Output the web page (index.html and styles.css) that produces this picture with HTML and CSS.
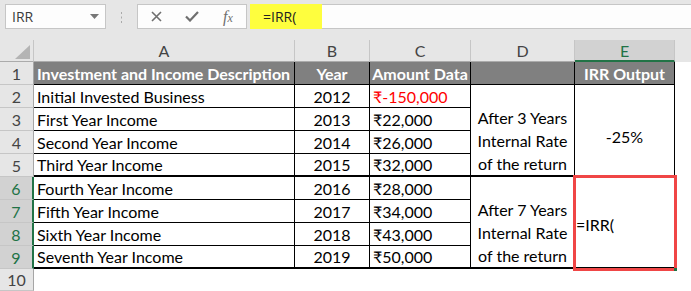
FILE: index.html
```html
<!DOCTYPE html>
<html lang="en">
<head>
    <meta charset="UTF-8">
    <title>IRR</title>
    <link rel="stylesheet" href="styles.css">
</head>
<body>
    <div class="toolbar">
        <div class="namebox">
            <span>IRR</span>
            <svg width="9" height="5" viewBox="0 0 9 5"><path d="M0 0h9L4.5 5z" fill="#777"/></svg>
        </div>
        <div class="grip">
            <svg width="3" height="11" viewBox="0 0 3 11"><rect x="1" y="0" width="1" height="2" fill="#aaa"/><rect x="1" y="4.5" width="1" height="2" fill="#aaa"/><rect x="1" y="9" width="1" height="2" fill="#aaa"/></svg>
        </div>
        <div class="fxbox">
            <span class="slot"><svg width="11" height="11" viewBox="0 0 11 11"><path d="M1 1l9 9M10 1l-9 9" stroke="#6f6f6f" stroke-width="1.6"/></svg></span>
            <span class="slot"><svg width="14" height="11" viewBox="0 0 14 11"><path d="M1 5.5l4 4L13 1" stroke="#6f6f6f" stroke-width="2.2" fill="none"/></svg></span>
            <span class="slot fx"><i>f</i><i class="x">x</i></span>
        </div>
        <div class="formula">
            <span class="hl">=IRR(</span>
        </div>
    </div>

    <div class="sheet">
        <div class="corner"><svg width="34" height="22" viewBox="0 0 34 22"><path d="M15 19L30 5v14z" fill="#b4b4b4"/></svg></div>
        <div class="col-h">A</div>
        <div class="col-h">B</div>
        <div class="col-h">C</div>
        <div class="col-h">D</div>
        <div class="col-h sel">E</div>
        <div class="col-h last"></div>

        <div class="row-h">1</div>
        <div class="cell head left">Investment and Income Description</div>
        <div class="cell head">Year</div>
        <div class="cell head">Amount Data</div>
        <div class="cell head"></div>
        <div class="cell head">IRR Output</div>
        <div class="blank"></div>

        <div class="row-h">2</div>
        <div class="cell">Initial Invested Business</div>
        <div class="cell mid">2012</div>
        <div class="cell neg">₹-150,000</div>
        <div class="cell note thick">After 3 Years Internal Rate of the return</div>
        <div class="cell result thick">-25%</div>
        <div class="blank"></div>

        <div class="row-h">3</div>
        <div class="cell">First Year Income</div>
        <div class="cell mid">2013</div>
        <div class="cell">₹22,000</div>
        <div class="blank"></div>

        <div class="row-h">4</div>
        <div class="cell">Second Year Income</div>
        <div class="cell mid">2014</div>
        <div class="cell">₹26,000</div>
        <div class="blank"></div>

        <div class="row-h">5</div>
        <div class="cell thick">Third Year Income</div>
        <div class="cell mid thick">2015</div>
        <div class="cell thick">₹32,000</div>
        <div class="blank"></div>

        <div class="row-h sel">6</div>
        <div class="cell">Fourth Year Income</div>
        <div class="cell mid">2016</div>
        <div class="cell">₹28,000</div>
        <div class="cell note thick">After 7 Years Internal Rate of the return</div>
        <div class="cell active thick">=IRR(</div>
        <div class="blank"></div>

        <div class="row-h sel">7</div>
        <div class="cell">Fifth Year Income</div>
        <div class="cell mid">2017</div>
        <div class="cell">₹34,000</div>
        <div class="blank"></div>

        <div class="row-h sel">8</div>
        <div class="cell">Sixth Year Income</div>
        <div class="cell mid">2018</div>
        <div class="cell">₹43,000</div>
        <div class="blank"></div>

        <div class="row-h sel">9</div>
        <div class="cell thick">Seventh Year Income</div>
        <div class="cell mid thick">2019</div>
        <div class="cell thick">₹50,000</div>
        <div class="blank"></div>

        <div class="row-h">10</div>
        <div class="blank wide"></div>
    </div>
</body>
</html>
```

FILE: styles.css
```css
body {
    margin: 0;
    width: 691px;
    height: 291px;
    overflow: hidden;
    background: #fff;
    font-family: Lato, "Noto Sans", sans-serif;
}

/* formula bar */
.toolbar {
    display: flex;
    align-items: flex-start;
    height: 40px;
    padding-top: 4px;
    box-sizing: border-box;
    background: #e6e6e6;
}

.namebox {
    margin-left: 5px;
    width: 101px;
    height: 25px;
    box-sizing: border-box;
    border: 1px solid #c6c6c6;
    background: #fdfdfd;
    display: flex;
    align-items: center;
    justify-content: space-between;
    padding: 0 6px 0 6px;
    font-family: "Open Sans", sans-serif;
    font-size: 14px;
    color: #3a3a3a;
}

.grip {
    width: 31px;
    display: flex;
    justify-content: center;
    padding-top: 8px;
}

.fxbox {
    width: 110px;
    height: 25px;
    box-sizing: border-box;
    border: 1px solid #c6c6c6;
    background: #fdfdfd;
    display: flex;
    align-items: center;
}

.slot {
    flex: 1;
    display: flex;
    justify-content: center;
    align-items: center;
}

.fx {
    font-family: "Liberation Serif", serif;
    font-size: 16px;
    color: #6f6f6f;
}

.fx .x {
    font-size: 12px;
    margin-top: 4px;
}

.formula {
    flex: 1;
    margin-left: 3px;
    height: 25px;
    box-sizing: border-box;
    border: 1px solid #c6c6c6;
    border-right: none;
    background: #fdfdfd;
    display: flex;
}

.hl {
    margin: -1px 0 -1px -1px;
    width: 72px;
    box-sizing: border-box;
    padding-left: 13px;
    background: #fefe3e;
    display: flex;
    align-items: center;
    font-family: "Open Sans", sans-serif;
    font-size: 14px;
    color: #222;
}

/* sheet grid */
.sheet {
    display: grid;
    grid-template-columns: 34px 261px 75px 101px 104px 100px 1fr;
    grid-template-rows: 22px repeat(9, 23px) 1fr;
    height: 251px;
    font-size: 16px;
    color: #000;
}

.sheet > div {
    box-sizing: border-box;
    min-width: 0;
}

.corner {
    background: #e6e6e6;
    border-right: 1px solid #c6c6c6;
    border-bottom: 1px solid #ababab;
}

.corner svg {
    display: block;
}

.col-h {
    background: #e6e6e6;
    border-right: 1px solid #c6c6c6;
    border-bottom: 1px solid #ababab;
    display: flex;
    align-items: center;
    justify-content: center;
    color: #444;
}

.col-h.sel {
    background: #d2d2d2;
    color: #217346;
    border-bottom: 2px solid #217346;
}

.col-h.last {
    border: none;
}

.row-h {
    background: #e6e6e6;
    border-right: 1px solid #a6a6a6;
    border-bottom: 1px solid #c6c6c6;
    display: flex;
    align-items: center;
    justify-content: center;
    color: #444;
}

.row-h.sel {
    background: #d2d2d2;
    color: #217346;
    border-right: 2px solid #217346;
}

.cell {
    border-right: 1px solid #000;
    border-bottom: 1px solid #000;
    display: flex;
    align-items: flex-end;
    padding: 0 3px 1px;
    white-space: nowrap;
}

.cell.head {
    background: #808080;
    color: #fff;
    font-weight: bold;
    justify-content: center;
}

.cell.head.left {
    justify-content: flex-start;
}

.cell.mid {
    justify-content: center;
}

.cell.neg {
    color: #f00;
}

.cell.thick {
    border-bottom-width: 2px;
}

.cell.note {
    grid-row: span 4;
    white-space: normal;
    text-align: center;
    justify-content: center;
    line-height: 23px;
    padding: 0 6px 0;
}

.cell.result {
    grid-row: span 4;
    justify-content: center;
    align-items: center;
    padding-top: 14px;
}

.cell.active {
    grid-row: span 4;
    align-items: center;
    position: relative;
    padding: 4px 0 0 1px;
}

/* selection frame and fill handle sit over the cell */
.cell.active::before {
    content: "";
    position: absolute;
    left: -2px;
    top: -2px;
    width: 104px;
    height: 96px;
    box-sizing: border-box;
    border: 3px solid #f04646;
}

.cell.active::after {
    content: "";
    position: absolute;
    right: -3px;
    bottom: -4px;
    width: 3px;
    height: 3px;
    background: #217346;
}

.blank.wide {
    grid-column: span 6;
}
```
